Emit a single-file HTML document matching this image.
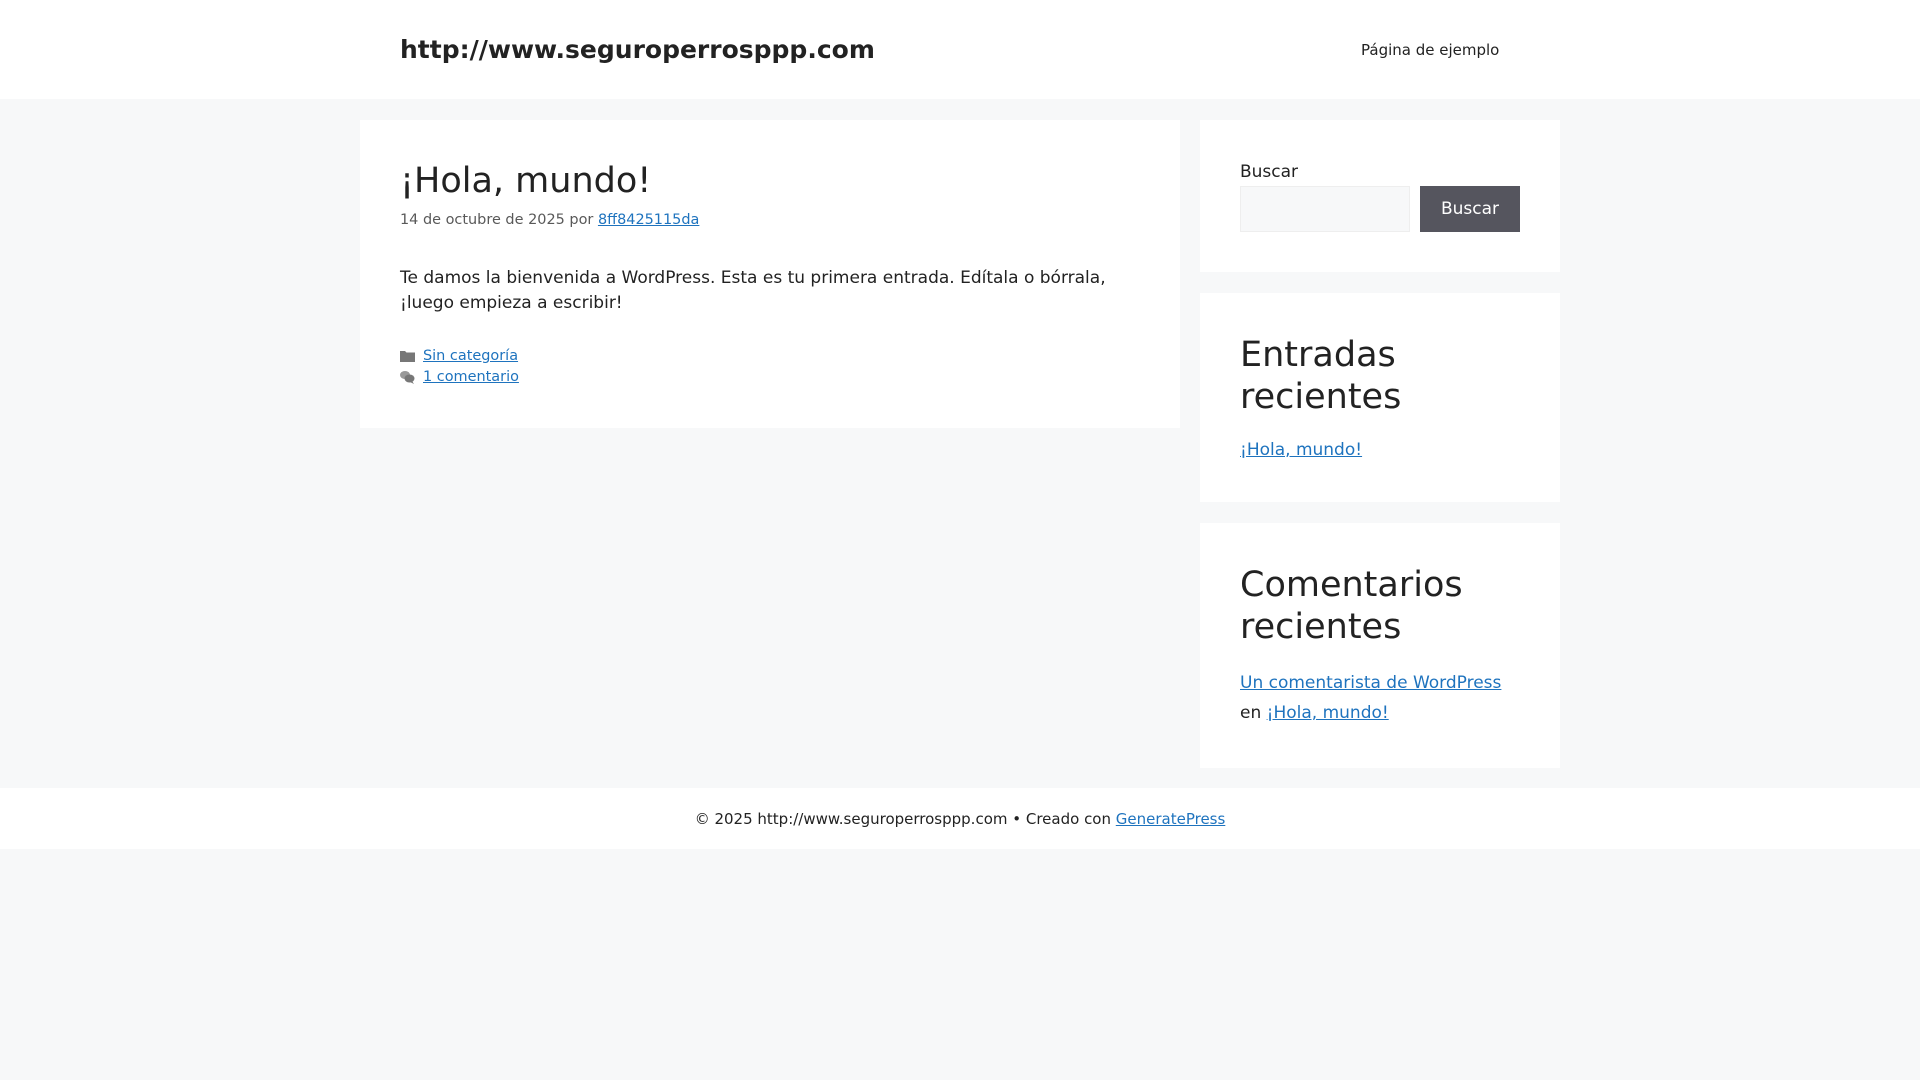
<!DOCTYPE html>
<html><head><meta charset="utf-8"><style>
*{box-sizing:border-box;margin:0;padding:0}
body{width:1920px;height:1080px;background:#f7f8f9;font-family:"DejaVu Sans","Liberation Sans",sans-serif;font-size:17px;line-height:1.5;color:#222}
a{color:#1e73be}
header{background:#fff;height:99px;position:relative}
.site-title{position:absolute;left:400px;top:33px;font-size:25px;font-weight:bold;line-height:34px;color:#222}
.nav{position:absolute;left:1361px;top:39px;font-size:15px;line-height:22px;color:#222}
.main{position:absolute;left:360px;top:120px;width:820px;height:308px;background:#fff;padding:40px}
h1{font-size:35px;font-weight:400;line-height:42px;margin-bottom:0}
.meta{font-size:14.45px;color:#595959;margin-top:8px}
.content{margin-top:34px}
.foot{margin-top:29px;font-size:14.45px;line-height:21px}
.foot div{display:flex;align-items:center;gap:8px}
.w{position:absolute;left:1200px;width:360px;background:#fff;padding:40px}
h2{font-size:35px;font-weight:400;line-height:1.2;margin-bottom:20px}
.btn{position:absolute;left:1420px;top:186px;width:100px;height:46px;background:#55555e;color:#fff;text-align:center;line-height:46px}
.inp{position:absolute;left:1240px;top:186px;width:170px;height:46px;background:#f7f8f9;border:1px solid #eee}
footer{position:absolute;top:788px;left:0;width:1920px;height:61px;background:#fff;text-align:center;font-size:15px;line-height:62px}
</style></head><body>
<header><div class="site-title">http://www.seguroperrosppp.com</div><div class="nav">Página de ejemplo</div></header>
<div class="main">
<h1>¡Hola, mundo!</h1>
<div class="meta">14 de octubre de 2025 por <a href="#">8ff8425115da</a></div>
<div class="content">Te damos la bienvenida a WordPress. Esta es tu primera entrada. Edítala o bórrala, ¡luego empieza a escribir!</div>
<div class="foot">
<div><svg width="15" height="12" viewBox="0 0 15 12"><path d="M0 1h5l1.5 1.5H15V12H0z" fill="#777"/></svg><a href="#">Sin categoría</a></div>
<div><svg width="15" height="14" viewBox="0 0 15 14"><ellipse cx="5" cy="5" rx="5" ry="4" fill="#999"/><ellipse cx="9.5" cy="8.5" rx="5" ry="4" fill="#777"/><path d="M12 11l2 3-4-2z" fill="#777"/></svg><a href="#">1 comentario</a></div>
</div>
</div>
<div class="w" style="top:120px;height:152px"><div style="line-height:24px;margin-top:0">Buscar</div></div>
<div class="inp"></div><div class="btn">Buscar</div>
<div class="w" style="top:293px;height:209px"><h2 style="margin-top:1px">Entradas recientes</h2><a href="#">¡Hola, mundo!</a></div>
<div class="w" style="top:523px;height:245px"><h2 style="margin-top:1px">Comentarios recientes</h2><div style="line-height:30px"><a href="#">Un comentarista de WordPress</a><br>en <a href="#">¡Hola, mundo!</a></div></div>
<footer>© 2025 http://www.seguroperrosppp.com • Creado con <a href="#">GeneratePress</a></footer>
</body></html>
